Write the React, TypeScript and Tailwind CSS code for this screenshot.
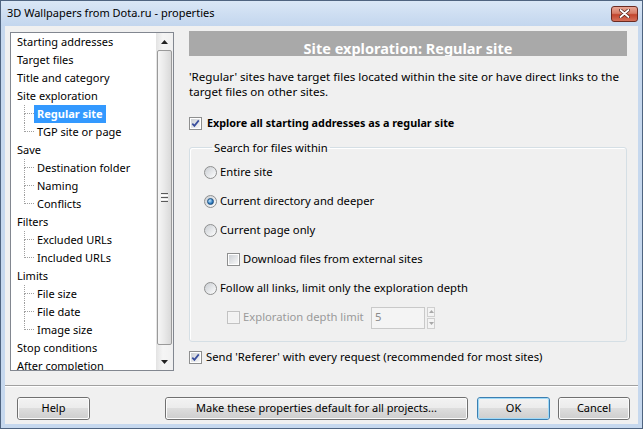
import React from 'react';

type TreeItem = { label: string; child?: boolean; last?: boolean; selected?: boolean };

const TREE: TreeItem[] = [
  { label: 'Starting addresses' },
  { label: 'Target files' },
  { label: 'Title and category' },
  { label: 'Site exploration' },
  { label: 'Regular site', child: true, selected: true },
  { label: 'TGP site or page', child: true, last: true },
  { label: 'Save' },
  { label: 'Destination folder', child: true },
  { label: 'Naming', child: true },
  { label: 'Conflicts', child: true, last: true },
  { label: 'Filters' },
  { label: 'Excluded URLs', child: true },
  { label: 'Included URLs', child: true, last: true },
  { label: 'Limits' },
  { label: 'File size', child: true },
  { label: 'File date', child: true },
  { label: 'Image size', child: true, last: true },
  { label: 'Stop conditions' },
  { label: 'After completion' },
];

function CheckBox({ checked, disabled }: { checked?: boolean; disabled?: boolean }) {
  return (
    <span
      className={`flex h-[13px] w-[13px] shrink-0 border p-px ${
        disabled ? 'border-[#c2c2c2] bg-[#f4f4f4]' : 'border-[#8e8f8f] bg-white'
      }`}
    >
      <span
        className={`flex h-full w-full items-center justify-center ${
          disabled ? 'bg-[#f2f2f2]' : 'bg-gradient-to-br from-[#ccd0d5] to-[#f8f8f8]'
        }`}
      >
        {checked && (
          <svg width="9" height="9" viewBox="0 0 9 9">
            <path d="M1.3 4.6 L3.4 6.9 L7.8 1.4" stroke="#3a4f9e" strokeWidth="1.7" fill="none" />
          </svg>
        )}
      </span>
    </span>
  );
}

function Radio({ checked }: { checked?: boolean }) {
  return (
    <span className="flex h-[13px] w-[13px] shrink-0 items-center justify-center rounded-full border border-[#8e8f8f] bg-gradient-to-br from-[#c9cdd2] to-white">
      {checked && (
        <span className="h-[7px] w-[7px] rounded-full border border-[#1b4f80] bg-[radial-gradient(circle_at_35%_35%,#c4e8ff,#2f7cc0_60%,#174878)]" />
      )}
    </span>
  );
}

function Button({ label, width, focused }: { label: string; width: string; focused?: boolean }) {
  return (
    <div
      className={`h-[23px] ${width} rounded-[3px] border ${
        focused ? 'border-[#3c7fb1]' : 'border-[#707070]'
      }`}
    >
      <div
        className={`flex h-full w-full items-center justify-center rounded-[2px] border ${
          focused ? 'border-[#9fd9f7]' : 'border-[#fbfbfb]'
        } bg-[linear-gradient(#f2f2f2_0%,#ebebeb_50%,#dddddd_50%,#cfcfcf_100%)] text-[11px] text-black`}
      >
        {label}
      </div>
    </div>
  );
}

function TreeRow({ item }: { item: TreeItem }) {
  if (!item.child) {
    return (
      <div className="flex h-[18px] shrink-0 items-center whitespace-nowrap pl-[6px]">{item.label}</div>
    );
  }
  return (
    <div className="flex h-[18px] shrink-0 items-stretch whitespace-nowrap pl-[13px]">
      <div className="flex w-[10px] flex-col">
        <div className="h-[9px] border-b border-l border-dotted border-[#a0a0a0]" />
        <div className={`flex-1 ${item.last ? '' : 'border-l border-dotted border-[#a0a0a0]'}`} />
      </div>
      <div className="flex items-center">
        <span
          className={`flex h-[18px] items-center px-[3px] ${
            item.selected ? 'bg-[#3399ff] font-bold text-white' : ''
          }`}
        >
          {item.label}
        </span>
      </div>
    </div>
  );
}

function ScrollBar() {
  return (
    <div className="flex w-[17px] shrink-0 flex-col bg-[linear-gradient(90deg,#e3e3e3,#f5f5f5_40%,#f0f0f0)]">
      <div className="flex h-[17px] items-center justify-center">
        <svg width="7" height="4" viewBox="0 0 7 4">
          <polygon points="0,4 7,4 3.5,0" fill="#222" />
        </svg>
      </div>
      <div className="flex flex-1 flex-col px-[1px] pb-[8px]">
        <div className="flex flex-1 items-center justify-center rounded-[2px] border border-[#9a9a9a] bg-[linear-gradient(90deg,#f6f6f6,#e9e9e9_50%,#d9d9d9)]">
          <div className="flex flex-col gap-[1px]">
            <div className="h-px w-[7px] bg-[#5a5a5a]" />
            <div className="h-px w-[7px] bg-white" />
            <div className="h-px w-[7px] bg-[#5a5a5a]" />
            <div className="h-px w-[7px] bg-white" />
            <div className="h-px w-[7px] bg-[#5a5a5a]" />
          </div>
        </div>
      </div>
      <div className="flex h-[17px] items-center justify-center">
        <svg width="7" height="4" viewBox="0 0 7 4">
          <polygon points="0,0 7,0 3.5,4" fill="#222" />
        </svg>
      </div>
    </div>
  );
}

export default function App() {
  return (
    <div className="flex h-[429px] w-[643px] flex-col overflow-hidden border border-[#4f6480] bg-[#c6d8ee] font-['Noto_Sans','Liberation_Sans',sans-serif] text-[11.25px] text-black">
      {/* title bar */}
      <div className="flex h-[25px] shrink-0 items-center justify-between bg-gradient-to-b from-[#dae7f6] to-[#c3d6ee] pl-[6px] pr-[4px]">
        <span className="text-[11px] text-black">3D Wallpapers from Dota.ru - properties</span>
        <div className="flex h-[16px] w-[27px] items-center justify-center rounded-[3px] border border-[#6b2b22] bg-[linear-gradient(#e8a696_0%,#d77d67_45%,#c2452d_55%,#d5705a_100%)]">
          <svg width="11" height="9" viewBox="0 0 11 9">
            <path d="M1.5 1 L9.5 8 M9.5 1 L1.5 8" stroke="#4a1b14" strokeWidth="3.2" strokeLinecap="round" />
            <path d="M1.5 1 L9.5 8 M9.5 1 L1.5 8" stroke="#fff" strokeWidth="1.8" strokeLinecap="round" />
          </svg>
        </div>
      </div>

      {/* client */}
      <div className="mx-[4px] mb-[4px] flex flex-1 flex-col bg-[#f0f0f0]">
        <div className="flex gap-[15px] pl-[5px] pr-[10px] pt-[5px]">
          {/* tree */}
          <div className="mt-[1px] flex h-[339px] w-[164px] shrink-0 border border-[#828790] bg-white">
            <div className="flex flex-1 flex-col overflow-hidden text-[11px] text-black">
              {TREE.map((item) => (
                <TreeRow key={item.label} item={item} />
              ))}
            </div>
            <ScrollBar />
          </div>

          {/* panel */}
          <div className="flex w-[438px] flex-col">
            <div className="h-[25px] overflow-hidden whitespace-nowrap bg-[#a9a9a9] pt-[9px] text-center text-[14.5px] font-bold leading-[16px] text-white">
              Site exploration: Regular site
            </div>

            <p className="mt-[13px] whitespace-nowrap text-[11.6px] leading-[15px]">
              'Regular' sites have target files located within the site or have direct links to the
              <br />
              target files on other sites.
            </p>

            <label className="mt-[17px] flex h-[15px] items-center gap-[5px] text-[10.8px] font-bold">
              <CheckBox checked />
              Explore all starting addresses as a regular site
            </label>

            <fieldset className="mt-[9px] rounded-[3px] border border-[#d5dfe5] pb-[9px] pl-[14px] shadow-[inset_1px_1px_0_#fff]">
              <legend className="ml-[8px] px-[2px] leading-[15px]">Search for files within</legend>
              <div className="mt-[3px] flex flex-col">
                <div className="flex h-[29px] items-center gap-[3px]">
                  <Radio />
                  Entire site
                </div>
                <div className="flex h-[29px] items-center gap-[3px]">
                  <Radio checked />
                  Current directory and deeper
                </div>
                <div className="flex h-[29px] items-center gap-[3px]">
                  <Radio />
                  Current page only
                </div>
                <div className="flex h-[29px] items-center gap-[3px] pl-[23px]">
                  <CheckBox />
                  Download files from external sites
                </div>
                <div className="flex h-[29px] items-center gap-[3px]">
                  <Radio />
                  Follow all links, limit only the exploration depth
                </div>
                <div className="flex h-[29px] items-center pl-[23px] text-[#9a9a9a]">
                  <CheckBox disabled />
                  <span className="ml-[3px] w-[128px]">Exploration depth limit</span>
                  <div className="flex h-[22px] w-[54px] items-center border border-[#c9c9c9] bg-[#f4f4f4] pl-[3px] text-[#8a8a8a]">
                    5
                  </div>
                  <div className="ml-[2px] flex h-[22px] w-[8px] flex-col gap-px">
                    <div className="flex flex-1 items-center justify-center border border-[#cfcfcf] bg-[#f4f4f4]">
                      <svg width="5" height="3" viewBox="0 0 5 3">
                        <polygon points="0,3 5,3 2.5,0" fill="#a8a8a8" />
                      </svg>
                    </div>
                    <div className="flex flex-1 items-center justify-center border border-[#cfcfcf] bg-[#f4f4f4]">
                      <svg width="5" height="3" viewBox="0 0 5 3">
                        <polygon points="0,0 5,0 2.5,3" fill="#a8a8a8" />
                      </svg>
                    </div>
                  </div>
                </div>
              </div>
            </fieldset>

            <label className="mt-[8px] flex h-[15px] items-center gap-[4px]">
              <CheckBox checked />
              Send 'Referer' with every request (recommended for most sites)
            </label>
          </div>
        </div>

        <div className="mt-[14px] border-t border-[#a0a0a0] shadow-[0_1px_0_#fff]" />

        <div className="mt-[11px] flex items-center pl-[12px]">
          <Button label="Help" width="w-[73px]" />
          <div className="ml-[75px]">
            <Button label="Make these properties default for all projects..." width="w-[303px]" />
          </div>
          <div className="ml-[9px]">
            <Button label="OK" width="w-[73px]" focused />
          </div>
          <div className="ml-[8px]">
            <Button label="Cancel" width="w-[72px]" />
          </div>
        </div>
      </div>
    </div>
  );
}
